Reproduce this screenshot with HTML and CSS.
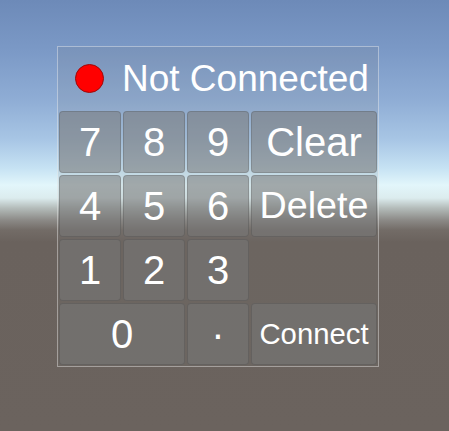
FILE: index.html
```html
<!DOCTYPE html>
<html>
<head>
<meta charset="utf-8">
<link rel="stylesheet" href="styles.css">
</head>
<body>
<div class="panel">
  <div class="header">
    <span class="led"></span>
    <span class="status">Not Connected</span>
  </div>
  <button class="key">7</button>
  <button class="key">8</button>
  <button class="key">9</button>
  <button class="key wide">Clear</button>
  <button class="key">4</button>
  <button class="key">5</button>
  <button class="key">6</button>
  <button class="key wide delete">Delete</button>
  <button class="key">1</button>
  <button class="key">2</button>
  <button class="key">3</button>
  <div class="empty"></div>
  <button class="key wide">0</button>
  <button class="key dot">·</button>
  <button class="key wide connect">Connect</button>
</div>
</body>
</html>
```
FILE: styles.css
```css
html, body {
  margin: 0;
  height: 100%;
}
body {
  padding: 46px 0 0 57px;
  box-sizing: border-box;
  font-family: "Liberation Sans", Arial, sans-serif;
  background: linear-gradient(to bottom,
    #6d8ab8 0px,
    #7b99c6 50px,
    #8fadd5 100px,
    #a8c6e5 140px,
    #c6e2f3 168px,
    #e2f6fb 185px,
    #dcecee 198px,
    #b4bcba 208px,
    #8c8a87 220px,
    #736c67 230px,
    #6a625d 242px,
    #6b635e 431px);
}
.panel {
  display: grid;
  grid-template-columns: repeat(5, 62px);
  grid-template-rows: 61px repeat(4, 62px);
  gap: 2px;
  width: max-content;
  padding: 1px;
  border: 1px solid rgba(255, 255, 255, 0.38);
  background: rgba(120, 120, 120, 0.14);
}
.header {
  grid-column: 1 / -1;
  display: flex;
  align-items: center;
  padding-left: 16px;
  gap: 18px;
}
.led {
  width: 27px;
  height: 27px;
  border-radius: 50%;
  background: #ff0000;
  border: 1px solid #9c0a0a;
  flex: none;
}
.status {
  color: #ffffff;
  font-size: 37px;
  line-height: 1;
  white-space: nowrap;
}
.key {
  margin: 0;
  padding: 0;
  font-family: inherit;
  font-size: 40px;
  line-height: 1;
  color: #ffffff;
  background: rgba(120, 120, 120, 0.55);
  border: 1px solid rgba(0, 0, 0, 0.13);
  border-radius: 4px;
  display: flex;
  align-items: center;
  justify-content: center;
}
.wide {
  grid-column: span 2;
}
.empty {
  grid-column: span 2;
}
.delete {
  font-size: 37.7px;
}
.connect {
  font-size: 29.3px;
}
.dot {
  font-size: 40px;
}
```
